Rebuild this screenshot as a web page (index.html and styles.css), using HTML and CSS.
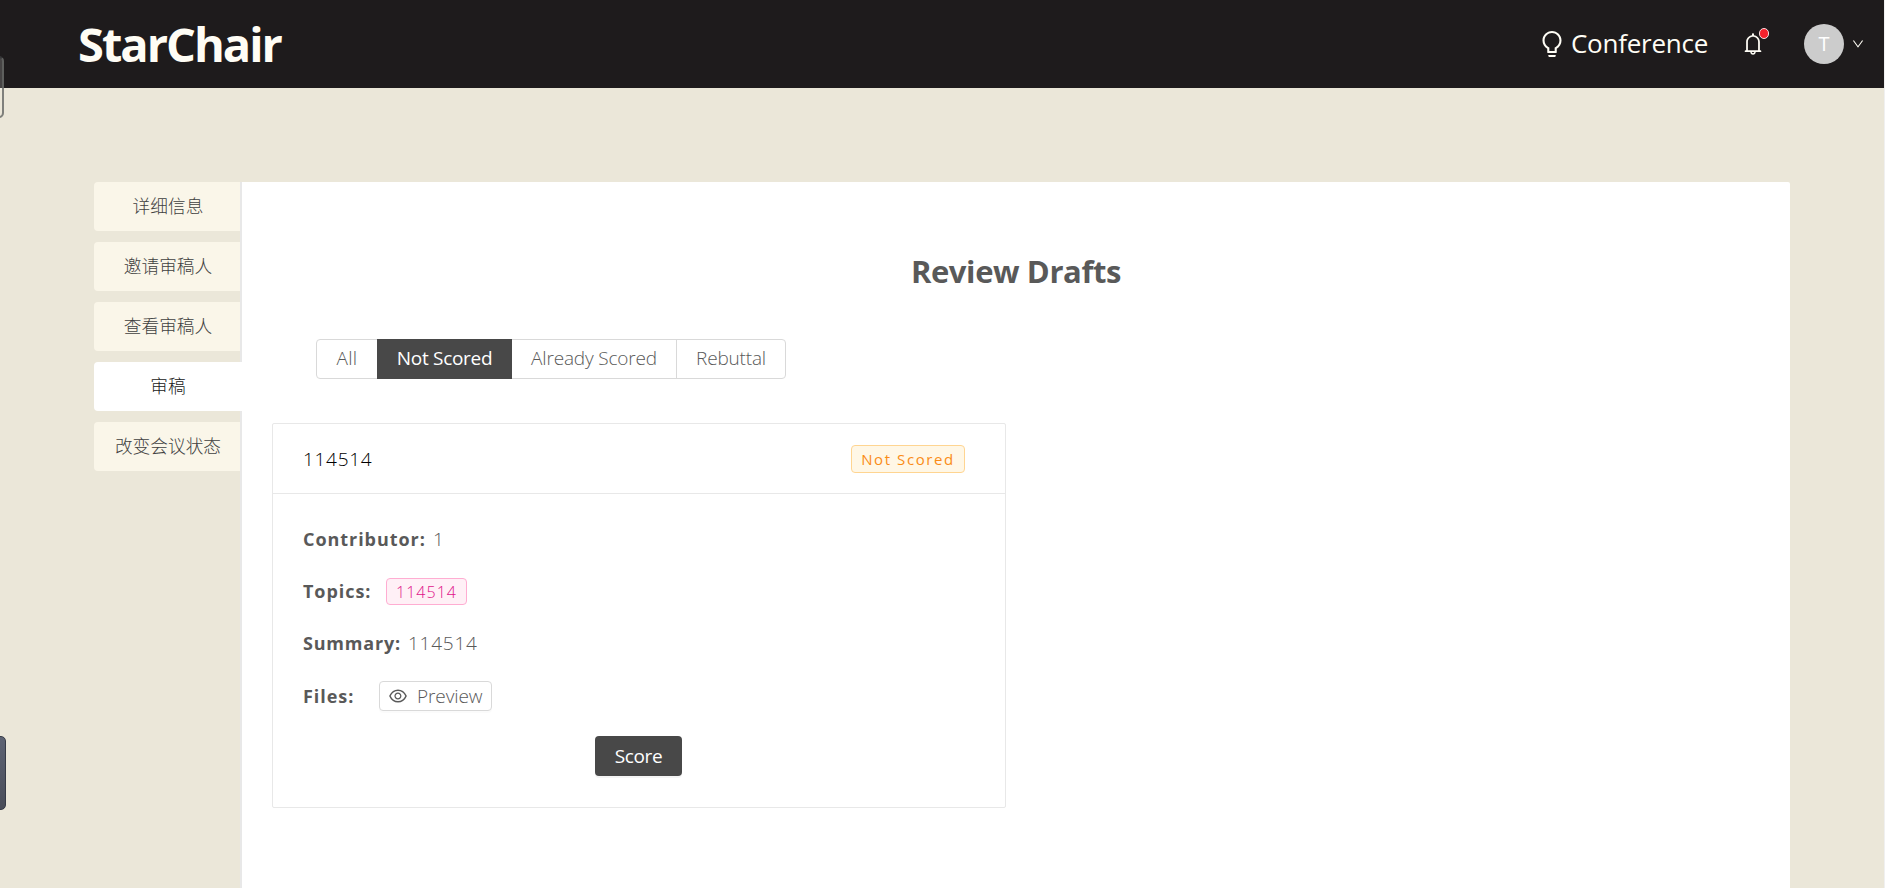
FILE: index.html
```html
<!DOCTYPE html>
<html lang="zh-CN">
<head>
<meta charset="utf-8">
<title>StarChair</title>
<link rel="stylesheet" href="styles.css">
</head>
<body>
<header class="header">
  <h1 class="logo">StarChair</h1>
  <nav class="nav">
    <a class="conference"><svg class="bulb" viewBox="64 64 896 896"><path d="M632 888H392c-4.400 0-8 3.600-8 8v32c0 17.700 14.300 32 32 32h192c17.700 0 32-14.300 32-32v-32c0-4.400-3.600-8-8-8zM512 64c-181.100 0-328 146.900-328 328 0 121.400 66 227.400 164 284.100V792c0 17.700 14.300 32 32 32h264c17.700 0 32-14.300 32-32V676.100c98-56.700 164-162.700 164-284.100 0-181.100-146.900-328-328-328zm127.900 549.800L604 634.600V752H420V634.600l-35.900-20.800C305.400 568.300 256 484.500 256 392c0-141.400 114.600-256 256-256s256 114.600 256 256c0 92.500-49.400 176.300-128.100 221.800z"/></svg><span class="conference-text">Conference</span></a>
    <span class="notice"><svg class="bell" viewBox="64 64 896 896"><path d="M816 768h-24V428c0-141.100-104.300-257.800-240-277.200V112c0-22.100-17.900-40-40-40s-40 17.900-40 40v38.800C336.300 170.200 232 286.900 232 428v340h-24c-17.700 0-32 14.300-32 32v32c0 4.400 3.600 8 8 8h216c0 61.800 50.200 112 112 112s112-50.200 112-112h216c4.400 0 8-3.600 8-8v-32c0-17.700-14.300-32-32-32zM512 888c-26.500 0-48-21.500-48-48h96c0 26.500-21.500 48-48 48zM304 768V428c0-55.600 21.600-107.800 60.900-147.100S456.400 220 512 220c55.600 0 107.800 21.600 147.100 60.900S720 372.400 720 428v340H304z"/></svg><i class="dot"></i></span>
    <span class="avatar">T</span>
    <svg class="down" viewBox="64 64 896 896"><path d="M884 256h-75c-5.100 0-9.900 2.500-12.900 6.600L512 654.200 227.900 262.600c-3-4.100-7.800-6.600-12.900-6.600h-75c-6.500 0-10.300 7.400-6.500 12.700l352.600 486.100c12.800 17.600 39 17.600 51.700 0l352.600-486.100c3.900-5.300.1-12.700-6.400-12.700z"/></svg>
  </nav>
</header>
<main class="main">
  <aside class="tabs">
    <a class="tab">详细信息</a>
    <a class="tab">邀请审稿人</a>
    <a class="tab">查看审稿人</a>
    <a class="tab active">审稿</a>
    <a class="tab">改变会议状态</a>
  </aside>
  <section class="panel">
    <h2 class="title">Review Drafts</h2>
    <div class="filter">
      <span class="option all">All</span>
      <span class="option checked">Not Scored</span>
      <span class="option already">Already Scored</span>
      <span class="option rebuttal">Rebuttal</span>
    </div>
    <article class="card">
      <div class="card-head"><span class="card-title">114514</span><span class="tag orange">Not Scored</span></div>
      <div class="card-body">
        <div class="row contributor"><b class="label">Contributor:</b><span class="value">1</span></div>
        <div class="row topics"><b class="label">Topics:</b><span class="tag pink">114514</span></div>
        <div class="row summary"><b class="label">Summary:</b><span class="value">114514</span></div>
        <div class="row files"><b class="label">Files:</b><button class="preview"><svg class="eye" viewBox="64 64 896 896"><path d="M942.200 486.200C847.400 286.500 704.100 186 512 186c-192.200 0-335.400 100.500-430.200 300.300a60.300 60.300 0 000 51.500C176.600 737.500 319.900 838 512 838c192.200 0 335.400-100.500 430.200-300.300 7.700-16.200 7.700-35 0-51.500zM512 766c-161.300 0-279.400-81.800-362.700-254C232.600 339.800 350.700 258 512 258c161.300 0 279.400 81.800 362.700 254C791.500 684.200 673.400 766 512 766zm-4-430c-97.200 0-176 78.800-176 176s78.800 176 176 176 176-78.800 176-176-78.800-176-176-176zm0 288c-61.900 0-112-50.100-112-112s50.100-112 112-112 112 50.100 112 112-50.100 112-112 112z"/></svg><span>Preview</span></button></div>
        <div class="actions"><button class="score">Score</button></div>
      </div>
    </article>
  </section>
</main>
<i class="edge-outline"></i>
<i class="edge-handle"></i>
</body>
</html>
```
FILE: styles.css
```css
* { box-sizing: border-box; }
body {
  margin: 0;
  height: 888px;
  overflow: hidden;
  background: #ebe7d9;
  border-right: 1px solid #f0f0f0;
  color: #595959;
  font-family: "Open Sans", "Noto Sans", "Noto Sans CJK SC", sans-serif;
  font-size: 19px;
  font-weight: 300;
}
svg { display: block; flex: none; fill: currentColor; }
button { font: inherit; color: inherit; }
.header {
  display: flex;
  align-items: center;
  justify-content: space-between;
  height: 88px;
  padding: 0 20px 0 78px;
  background: #1e1b1c;
  color: #fffdf5;
}
.logo { margin: 0; font-size: 47px; font-weight: 700; line-height: 86px; letter-spacing: -2px; }
.nav { display: flex; align-items: center; }
.conference { display: flex; align-items: center; gap: 6px; margin-right: 34px; }
.bulb { width: 26px; height: 26px; }
.conference-text { height: 88px; font-size: 26px; font-weight: 400; line-height: 86px; letter-spacing: -.25px; }
.notice { position: relative; margin-right: 40px; }
.bell { width: 22px; height: 22px; }
.dot {
  position: absolute;
  top: -5px;
  right: -5px;
  width: 10px;
  height: 11px;
  border: 1px solid #f5dfe0;
  border-radius: 5px;
  background: #f5222d;
}
.avatar {
  width: 40px;
  height: 40px;
  margin-right: 8px;
  border-radius: 50%;
  background: #ccc;
  color: #fff;
  font-size: 20px;
  font-weight: 400;
  line-height: 40px;
  text-align: center;
}
.down { width: 12px; height: 12px; }
.main { display: flex; height: 800px; padding: 94px 94px 0; }
.tabs { display: flex; flex-direction: column; gap: 11px; width: 148px; border-right: 2px solid #e8e8e8; }
.tab {
  height: 49px;
  padding-left: 2px;
  border-radius: 4px 0 0 4px;
  background: #faf6e9;
  color: #404040;
  font-family: "Noto Sans CJK SC", sans-serif;
  font-size: 17.700px;
  line-height: 46px;
  text-align: center;
}
.tab.active { margin-right: -2px; padding-right: 2px; background: #fff; color: #202020; }
.panel { flex: 1; padding: 66px 30px 0; background: #fff; border-radius: 0 2px 0 0; }
.title { margin: 0; font-size: 31px; font-weight: 700; line-height: 46px; letter-spacing: -.4px; text-align: center; }
.filter { display: flex; width: 470px; height: 40px; margin: 45px 0 44px 44px; border: 1px solid #d9d9d9; border-radius: 4px; }
.option { line-height: 36px; letter-spacing: -.17px; text-align: center; }
.all { width: 60px; letter-spacing: .3px; }
.checked { width: 135px; margin: -1px 0; background: #484848; color: #fff; line-height: 38px; font-weight: 400; letter-spacing: -.3px; }
.already { width: 165px; border-right: 1px solid #d9d9d9; }
.rebuttal { width: 108px; }
.card { width: 734px; height: 385px; border: 1px solid #e8e8e8; border-radius: 2px; }
.card-head {
  display: flex;
  align-items: center;
  justify-content: space-between;
  height: 70px;
  padding: 0 40px 0 30px;
  border-bottom: 1px solid #e8e8e8;
}
.card-title { color: #000; letter-spacing: .7px; }
.tag { display: block; border: 1px solid; border-radius: 4px; font-size: 16px; letter-spacing: 1px; text-align: center; white-space: nowrap; }
.orange { width: 114px; height: 28px; border-color: #ffd591; background: #fff7e6; color: #fa8c16; font-size: 15px; font-weight: 400; line-height: 27px; letter-spacing: 1.600px; }
.pink { width: 81px; height: 27px; margin-left: 13px; border-color: #ffadd2; background: #fff0f6; color: #e0148a; line-height: 26px; }
.card-body { padding: 19px 30px 0; }
.row { display: flex; align-items: center; height: 52.400px; line-height: 26px; }
.label { flex: none; font-size: 18px; font-weight: 700; letter-spacing: .95px; }
.contributor .label { width: 123px; }
.topics .label { width: 70px; padding-bottom: 2px; }
.summary { padding-bottom: 2px; }
.summary .label { width: 98px; letter-spacing: .8px; }
.files .label { width: 52px; }
.value { margin-left: 7px; letter-spacing: .75px; }
.preview {
  display: flex;
  align-items: center;
  gap: 10px;
  width: 113px;
  height: 30px;
  margin-left: 24px;
  padding: 0 9px;
  border: 1px solid #d9d9d9;
  border-radius: 4px;
  background: #fff;
  box-shadow: 0 2px 0 rgba(0, 0, 0, .015);
  letter-spacing: -.1px;
}
.eye { width: 18px; height: 18px; }
.actions { display: flex; justify-content: center; margin-top: 13px; padding-right: 1px; }
.score {
  width: 87px;
  height: 40px;
  padding: 0;
  border: 0;
  border-radius: 4px;
  background: #484848;
  box-shadow: 0 2px 0 rgba(0, 0, 0, .045);
  color: #fff;
  font-weight: 400;
  letter-spacing: -.4px;
}
.edge-outline {
  position: absolute;
  top: 56px;
  left: -10px;
  width: 14px;
  height: 62px;
  border: 2px solid rgba(100, 103, 100, .8);
  border-top-color: #353637;
  border-radius: 5px;
  background: linear-gradient(rgba(255, 255, 255, .18) 32px, transparent 32px);
}
.edge-handle {
  position: absolute;
  top: 736px;
  left: -8px;
  width: 14px;
  height: 74px;
  border: 1px solid #363b47;
  border-radius: 5px;
  background: linear-gradient(#5d6373, #494d59);
}
```
